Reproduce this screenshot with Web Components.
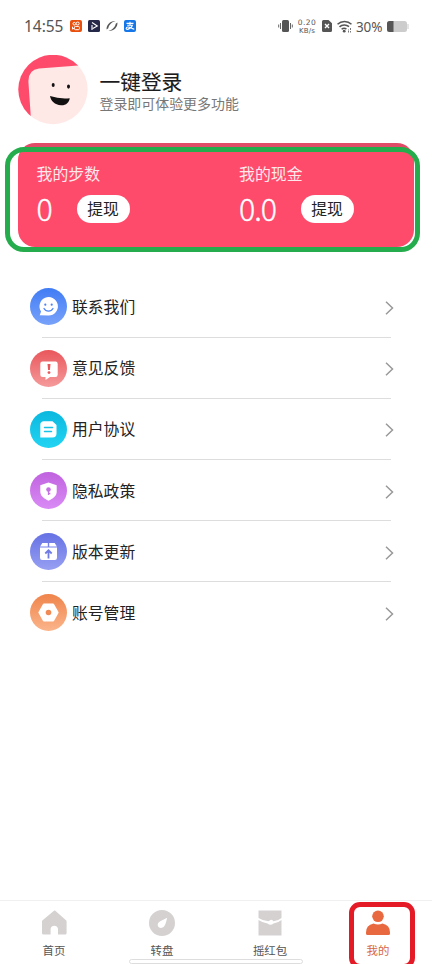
<!DOCTYPE html>
<html lang="zh-CN">
<head>
<meta charset="utf-8">
<title>我的</title>
<style>
html,body{margin:0;padding:0;background:#fff}
body{width:432px;height:964px;overflow:hidden;font-family:"Noto Sans CJK SC","Noto Sans",sans-serif}
</style>
</head>
<body>
<profile-page></profile-page>
<script>
const define = (name, render) => customElements.define(name, class extends HTMLElement {
  connectedCallback() {
    if (this.shadowRoot) return;
    this.attachShadow({ mode: 'open' }).innerHTML = render(this);
  }
});

define('status-bar', () => `
<style>
:host{display:flex;box-sizing:border-box;height:52px;padding:0 23px 0 24px;align-items:center;color:#555;font-family:"Noto Sans",sans-serif}
.time{font-size:15.5px;line-height:20px;width:46px;letter-spacing:-.05px}
.apps{display:flex;gap:6px}
svg{display:block;flex:none}
.right{margin-left:auto;display:flex;align-items:center}
.speed{display:flex;flex-direction:column;align-items:center;width:20px;margin:0 5px 0 4px;font-family:"DejaVu Sans",sans-serif;font-size:7.5px;white-space:nowrap}
.speed b{font-weight:400;display:block;height:9px;line-height:9px;letter-spacing:.5px}
.speed b+b{font-size:7px;letter-spacing:.1px;height:8px;line-height:8px}
.pct{font-size:13.5px;line-height:20px;width:27px;margin:1px 4px 0 4px;white-space:nowrap;letter-spacing:-.1px}
</style>
<span class="time">14:55</span>
<span class="apps">
<svg width="12" height="12" viewBox="0 0 12 12"><rect width="12" height="12" rx="2" fill="#e9500e"/><g fill="none" stroke="#fff"><circle cx="4.3" cy="3.7" r="1.3"/><circle cx="7.7" cy="3.5" r="1.5"/><rect x="4.4" y="6.4" width="5" height="3.3" rx="1"/><path d="M2.5 6.7v2.4l1.9-.9"/></g></svg>
<svg width="12" height="12" viewBox="0 0 12 12"><rect width="12" height="12" rx="1.5" fill="#252849"/><path d="M4 5v5M4 2.500L9.300 6 4.800 8.500" fill="none" stroke="#fff" stroke-width="1.100"/></svg>
<svg width="12" height="12" viewBox="0 0 12 12"><path d="M.6 9.500C0 5 4.500 .6 9.500 1 6 1.900 2.800 4.800 2.300 8.200zM11.400 2.500C12 7 7.500 11.400 2.500 11 6 10.100 9.200 7.200 9.700 3.800z" fill="#555"/></svg>
<svg width="12" height="12" viewBox="0 0 12 12"><rect width="12" height="12" rx="2" fill="#1677e8"/><path d="M2.5 3.4h7M6 1.8v3.4M3.2 5.2h5.2C7.8 7 6.2 8.8 3.6 9.4 1.5 9.6 1.8 7 4 7c2 0 4 1.5 6.3 2.2" fill="none" stroke="#fff" stroke-width="1.1"/></svg>
</span>
<span class="right">
<svg width="15" height="14" viewBox="0 0 15 14"><rect x="4" y="1" width="7" height="12" rx="1.5" fill="#555"/><path d="M2.5 4v6M.7 5.5v3M12.5 4v6M14.3 5.5v3" stroke="#666"/></svg>
<span class="speed"><b>0.20</b><b>KB/s</b></span>
<svg width="10" height="12" viewBox="0 0 10 12"><path d="M1.500 0h5L10 3.300v7.200A1.500 1.500 0 0 1 8.500 12h-7A1.500 1.500 0 0 1 0 10.500v-9A1.500 1.500 0 0 1 1.500 0z" fill="#555"/><path d="M3 4l4 4M7 4L3 8" stroke="#fff" stroke-width="1.400"/></svg>
<svg style="margin-left:5px" width="15" height="13" viewBox="0 0 15 13"><g fill="none" stroke="#555" stroke-width="1.500"><path d="M.5 4.300a10 10 0 0 1 14 0M2.500 6.900a7 7 0 0 1 9.500-.3M4.600 9.300a4 4 0 0 1 4.800-.3"/></g><circle cx="7.200" cy="11.200" r="1.400" fill="#555"/><path d="M11.500 12.500V9M13.500 8v4.500" stroke="#777" stroke-dasharray="2 1"/></svg>
<span class="pct">30%</span>
<svg width="22" height="11" viewBox="0 0 22 11"><rect width="20" height="11" rx="2.500" fill="#ccc"/><path d="M20.500 3h1v5h-1z" fill="#ccc"/><path d="M2.500 0H6.500v11h-4A2.500 2.500 0 0 1 0 8.500v-6A2.500 2.500 0 0 1 2.500 0z" fill="#555"/></svg>
</span>`);

define('user-header', () => `
<style>
:host{display:flex;height:70px;padding:3px 0 0 18px;gap:11.5px}
svg{display:block;flex:none}
h1{margin:11.5px 0 0;font-size:20.7px;line-height:28px;font-weight:400;color:#1c1c1c;-webkit-text-stroke:.1px #1c1c1c}
p{margin:-1.500px 0 0;font-size:13.950px;line-height:20px;color:#777}
</style>
<svg width="70" height="70" viewBox="0 0 70 70"><defs><clipPath id="c"><circle cx="35" cy="34.500" r="34.700"/></clipPath></defs><g clip-path="url(#c)"><path d="M0 0h70v70H0z" fill="#ffe9e7"/><path d="M0 0H70V9.700L21 13.500Q9.500 15 10.500 28L13.500 72H0z" fill="#ff4b6b"/></g><ellipse cx="35.200" cy="30" rx="1.500" ry="2.100" fill="#111"/><ellipse cx="50.500" cy="31.600" rx="1.500" ry="2.100" fill="#111"/><path d="M32 41q9.500 3.200 19.700 2.200c-.4 4.300-3.900 7.300-8.700 7-6.300-.3-10.200-4.200-11-9.200z" fill="#111"/></svg>
<div><h1><slot name="title"></slot></h1><p><slot></slot></p></div>`);

define('balance-item', el => `
<style>
:host{display:block;color:#fff}
.label{font-size:15.900px;line-height:24px;color:#ffe8ec}
.row{display:flex;align-items:center;height:28px;margin-top:9px}
.num{font-size:30.300px;line-height:28px;letter-spacing:-1px;font-weight:300;width:var(--num-width);margin-top:-2px;-webkit-text-stroke:.35px #fff}
button{font:inherit;font-size:15.800px;line-height:26px;border:0;padding:0;margin:0;width:53px;height:28px;border-radius:14px;background:#fff;color:#222}
</style>
<div class="label">${el.getAttribute('label')}</div>
<div class="row"><span class="num">${el.getAttribute('value')}</span><button><slot></slot></button></div>`);

define('balance-card', () => `
<style>
:host{display:block;position:relative;box-sizing:border-box;width:396px;height:104px;margin:18px 0 0 18px;padding:19px 0 0 18.500px;border-radius:17px;background:linear-gradient(#e24b67 0 4px,#ff4b6b 4px)}
.items{display:grid;grid-template-columns:202.500px 1fr}
.frame{position:absolute;box-sizing:border-box;left:-13px;top:4px;width:415px;height:105px;border:5px solid #25ad4d;border-radius:19px;pointer-events:none}
</style>
<div class="items"><slot></slot></div><div class="frame"></div>`);

const menuIcons = {
  contact: ['#417cf5', '#78a2fa', '<path d="M9.700 27.200l1.400-3.700A9.200 9.200 0 1 1 18.500 27.500z" fill="#fff"/><circle cx="15.300" cy="16.700" r="1.100" fill="#4c84f5"/><circle cx="21.700" cy="16.700" r="1.100" fill="#4c84f5"/><path d="M14 20.500c2 3.500 7 3.500 9 0" fill="none" stroke="#4c84f5" stroke-width="1.300" stroke-linecap="round"/>'],
  feedback: ['#e9575b', '#f59a9b', '<path d="M12.500 11.500h13a2.200 2.200 0 0 1 2.200 2.200v11a2.200 2.200 0 0 1-2.200 2.200h-5.500L15.500 30v-3.100h-3a2.200 2.200 0 0 1-2.200-2.200v-11a2.200 2.200 0 0 1 2.200-2.200z" fill="#fff"/><path d="M17.500 14h3l-.6 6h-1.800z" fill="#e9575b"/><circle cx="19" cy="22.600" r="1.400" fill="#e9575b"/>'],
  terms: ['#0bb8df', '#22d4f2', '<path d="M14 10.300h8.500l4 3.800v8.400a4 4 0 0 1-4 4H10.300V14A3.700 3.700 0 0 1 14 10.300z" fill="#fff"/><path d="M14.500 16.500h8M14.500 20.500h7" stroke="#16c2e5" stroke-width="1.500" stroke-linecap="round"/>'],
  privacy: ['#c062df', '#d98bf5', '<path d="M18.500 10.500l8.200 2.800v6.400c0 4.300-4 7-8.200 9-4.200-2-8.200-4.700-8.200-9v-6.400z" fill="#fff"/><circle cx="18.500" cy="17.500" r="2.300" fill="#c570e5"/><path d="M18.500 18v5M18.500 21.500h1.800" stroke="#c570e5" stroke-width="1.300"/>'],
  update: ['#6671e4', '#97a0f2', '<path d="M12.300 10h5.500v3.500h-7.700zM19.200 10h5.500l2.200 3.500h-7.700z" fill="#fff"/><path d="M10 14.500h17v10.200a2.200 2.200 0 0 1-2.200 2.200H12.200a2.200 2.200 0 0 1-2.200-2.200z" fill="#fff"/><path d="M18.500 25.500V18M15.300 20.500l3.200-3.200 3.200 3.200" fill="none" stroke="#707ce6" stroke-width="1.800"/>'],
  account: ['#ef844b', '#fbb58b', '<path d="M13.800 10.500h9.400l4.500 8-4.500 8h-9.400L9.300 18.500z" fill="#fff" stroke="#fff" stroke-width="1.800" stroke-linejoin="round"/><circle cx="18.500" cy="18.500" r="2.800" fill="#f08b55"/>']
};
define('menu-row', el => {
  const [a, b, art] = menuIcons[el.getAttribute('icon')];
  return `
<style>
:host{display:flex;box-sizing:border-box;height:61.200px;padding:0 38px 0 30px;align-items:center;position:relative;color:#222;font-size:15.800px;line-height:24px}
:host::after{content:"";position:absolute;left:41.500px;right:41.500px;bottom:0;height:1px;background:#ddd}
:host(:last-child)::after{display:none}
svg{display:block;flex:none}
span{flex:1;margin-left:5px}
</style>
<svg width="37" height="37" viewBox="0 0 37 37"><defs><linearGradient id="g" x2="0" y2="1"><stop stop-color="${a}"/><stop offset="1" stop-color="${b}"/></linearGradient></defs><circle cx="18.500" cy="18.500" r="18.500" fill="url(#g)"/>${art}</svg>
<span><slot></slot></span>
<svg style="margin-top:2px" width="9" height="14" viewBox="0 0 9 14"><path d="M1 .8L7.500 7 1 13.200" fill="none" stroke="#999" stroke-width="1.500"/></svg>`;
});

define('menu-list', () => `<style>:host{display:block;margin-top:29.400px}</style><slot></slot>`);

const tabIcons = {
  home: '<path d="M14 .8q.5-.5 1-.2L26 10.300q.6.500.6 1.300V23a1.500 1.500 0 0 1-1.500 1.500H18V18.800a3.800 3.800 0 0 0-7.400 0v5.700H3.500A1.500 1.500 0 0 1 2 23V11.600q0-.8.600-1.300z"/>',
  wheel: '<path fill-rule="evenodd" d="M14 0a13 13 0 1 1 0 26 13 13 0 0 1 0-26zM19.200 7.800l-7 3.500c-5 3-1.500 8.200 2.500 6.200 2.500-1.200 3-4 4.500-9.700z"/>',
  packet: '<path d="M2.500.500h23v7.500Q22 10.900 17.500 11.300q-1.600-3-5 0Q7 10.900 2.500 8z"/><path d="M2.500 10q4.500 3 9 3.400 3 2.500 6 0 4.500-.4 8-3.400v15.500h-23z"/>',
  me: '<circle cx="14" cy="6.300" r="5.800"/><path d="M9.500 13.400q4.500 2 9 0 7.500 1.500 7.500 9v1q0 1.600-1.600 1.600H3.600Q2 25 2 23.400v-1q0-7.500 7.500-9z"/>'
};
define('tab-item', el => `
<style>
:host{display:flex;flex-direction:column;align-items:center;padding-top:9px;color:#555;font-size:11.400px;line-height:16px;fill:#d5d1d1;position:relative}
:host([active]){color:#d9673f;fill:#e8693f}
svg{display:block}
span{margin-top:6px}
.mark{position:absolute;box-sizing:border-box;left:25px;top:1px;width:66px;height:67px;border:5px solid #e41b26;border-radius:11px}
</style>
<svg width="28" height="26" viewBox="0 0 28 26">${tabIcons[el.getAttribute('icon')]}</svg><span><slot></slot></span>${el.hasAttribute('active') ? '<div class="mark"></div>' : ''}`);

define('tab-bar', () => `
<style>
:host{display:grid;grid-template-columns:repeat(4,108px);box-sizing:border-box;height:64px;margin-top:auto;border-top:1px solid #f0f0f0;position:relative;flex:none}
.handle{position:absolute;box-sizing:border-box;left:129px;top:58px;width:174px;height:5px;border:1px solid #ddd;border-radius:2.500px;background:#fff}
</style>
<slot></slot><div class="handle"></div>`);

define('profile-page', () => `
<style>:host{display:flex;flex-direction:column;width:432px;height:964px;overflow:hidden;background:#fff}</style>
<status-bar></status-bar>
<user-header><span slot="title">一键登录</span>登录即可体验更多功能</user-header>
<balance-card>
<balance-item label="我的步数" value="0" style="--num-width:40px">提现</balance-item>
<balance-item label="我的现金" value="0.0" style="--num-width:61.500px">提现</balance-item>
</balance-card>
<menu-list>
<menu-row icon="contact">联系我们</menu-row>
<menu-row icon="feedback">意见反馈</menu-row>
<menu-row icon="terms">用户协议</menu-row>
<menu-row icon="privacy">隐私政策</menu-row>
<menu-row icon="update">版本更新</menu-row>
<menu-row icon="account">账号管理</menu-row>
</menu-list>
<tab-bar>
<tab-item icon="home">首页</tab-item>
<tab-item icon="wheel">转盘</tab-item>
<tab-item icon="packet">摇红包</tab-item>
<tab-item icon="me" active>我的</tab-item>
</tab-bar>`);
</script>
</body>
</html>
